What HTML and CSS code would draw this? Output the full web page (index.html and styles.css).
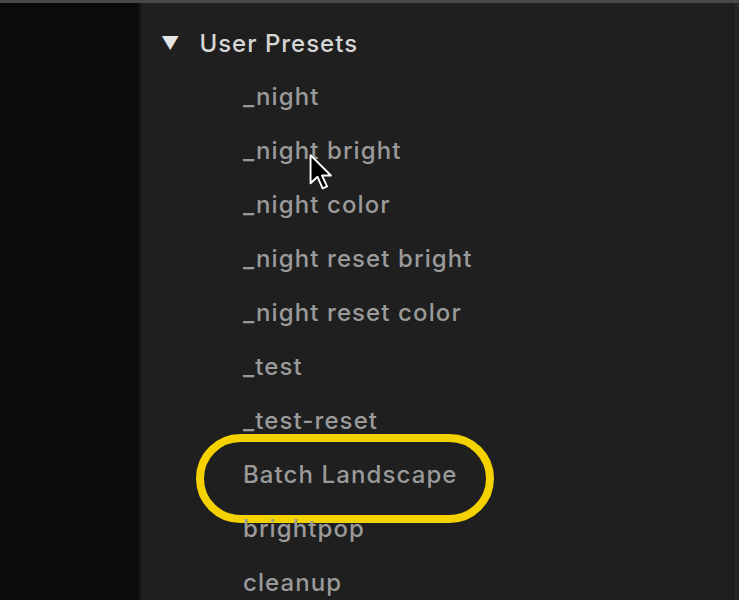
FILE: index.html
```html
<!DOCTYPE html>
<html lang="en">
<head>
<meta charset="UTF-8">
<title>User Presets</title>
<link rel="stylesheet" href="styles.css">
</head>
<body>

<div class="window">
    <!-- left dark column -->
    <div class="gutter"></div>

    <!-- presets panel -->
    <div class="panel">
        <div class="group-head">
            <span class="caret">&#9660;</span>
            <span>User Presets</span>
        </div>
        <ul class="preset-list">
            <li>_night</li>
            <li class="hovered">_night bright
                <svg class="cursor" width="28" height="42" viewBox="0 0 22 32">
                    <path d="M2 2 L2 24 L7.5 19 L11.5 28 L15 26.5 L11 18 L18 18 Z" fill="#000" stroke="#fff" stroke-width="1.5" stroke-linejoin="round"/>
                </svg>
            </li>
            <li>_night color</li>
            <li>_night reset bright</li>
            <li>_night reset color</li>
            <li>_test</li>
            <li>_test-reset</li>
            <li class="marked">Batch Landscape</li>
            <li>brightpop</li>
            <li>cleanup</li>
        </ul>
    </div>
</div>

</body>
</html>
```

FILE: styles.css
```css
/* Dark preset browser */
html, body {
    margin: 0;
    height: 100%;
    overflow: hidden;
    background-color: #1f1f1f;
}

body {
    font-family: Inter, "Liberation Sans", sans-serif;
}

.window {
    display: flex;
    height: 100%;
    border-top: 3px solid #484848;
    box-sizing: border-box;
}

.gutter {
    width: 138px;
    flex-shrink: 0;
    background-color: #0b0b0b;
    border-right: 3px solid #141414;
}

.panel {
    flex: 1;
    padding-top: 13px;
    border-right: 4px solid #272727;
}

.group-head {
    display: flex;
    align-items: center;
    height: 54px;
    padding-left: 20px;
    color: #d6d6d6;
    font-size: 24px;
    font-weight: 500;
    letter-spacing: 1px;
}

.caret {
    font-size: 18px;
    margin-right: 19px;
    color: #e4e4e4;
}

.preset-list {
    list-style: none;
    margin: 0;
    padding: 0 0 0 102px;
}

.preset-list li {
    position: relative;
    height: 54px;
    line-height: 54px;
    color: #9a9a9a;
    font-size: 24px;
    font-weight: 500;
    letter-spacing: 1.1px;
    white-space: nowrap;
}

.cursor {
    position: absolute;
    left: 65px;
    top: 28px;
}

.marked::before {
    content: "";
    position: absolute;
    left: -47px;
    top: -14px;
    width: 282px;
    height: 73px;
    border: 8px solid #f4d200;
    border-radius: 45px;
}
```
